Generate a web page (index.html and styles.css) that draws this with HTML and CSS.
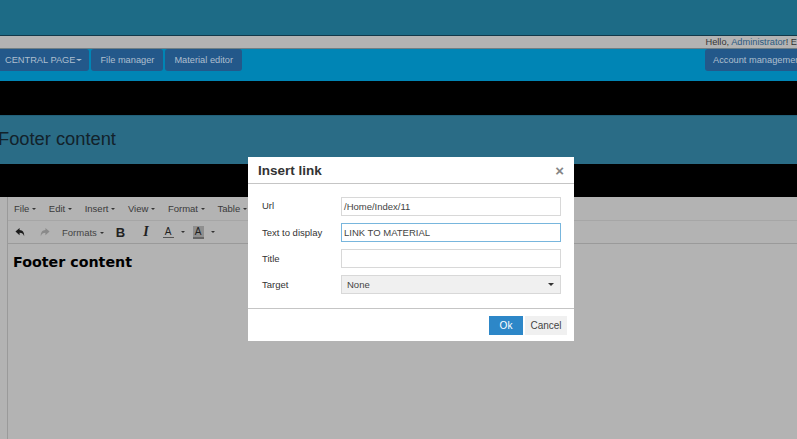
FILE: index.html
```html
<!DOCTYPE html>
<html lang="en">
<head>
    <meta charset="UTF-8">
    <title>Insert link</title>
    <link rel="stylesheet" href="styles.css">
</head>
<body>
    <div class="top-band"></div>
    <div class="user-bar">Hello, <a class="user-link">Administrator</a>! E</div>
    <nav class="nav-bar">
        <div class="nav-group">
            <span class="nav-btn nav-first">CENTRAL PAGE<i class="nav-caret"></i></span>
            <span class="nav-btn">File manager</span>
            <span class="nav-btn">Material editor</span>
        </div>
        <span class="nav-btn nav-account">Account management</span>
    </nav>
    <div class="black-band band-one"></div>
    <div class="footer-band">Footer content</div>
    <div class="black-band band-two"></div>

    <div class="editor">
        <div class="menu-row">
            <span class="menu-item">File<i class="caret"></i></span>
            <span class="menu-item">Edit<i class="caret"></i></span>
            <span class="menu-item">Insert<i class="caret"></i></span>
            <span class="menu-item">View<i class="caret"></i></span>
            <span class="menu-item">Format<i class="caret"></i></span>
            <span class="menu-item">Table<i class="caret"></i></span>
        </div>
        <div class="tool-row">
            <svg class="tool-icon" viewBox="0 0 12 12"><path fill="#1c1c1c" d="M5 1 0.5 5 5 9V6.300c2.600 0 4 1 5 3.700.3-3.600-1.500-6.400-5-6.600z"/></svg>
            <svg class="tool-icon tool-redo" viewBox="0 0 12 12"><path fill="#8a8a8a" d="M7 1l4.500 4L7 9V6.300c-2.600 0-4 1-5 3.700-.3-3.600 1.500-6.400 5-6.600z"/></svg>
            <span class="tool-formats">Formats<i class="caret"></i></span>
            <b class="tool-bold">B</b>
            <i class="tool-italic">I</i>
            <span class="tool-color">A</span><i class="caret tool-caret"></i>
            <span class="tool-color tool-back">A</span><i class="caret tool-caret"></i>
        </div>
        <div class="editor-body">Footer content</div>
    </div>

    <div class="modal">
        <div class="modal-head">
            <span class="modal-title">Insert link</span>
            <span class="modal-close">×</span>
        </div>
        <div class="modal-body">
            <div class="field">
                <span class="field-label label-url">Url</span>
                <span class="field-input">/Home/Index/11</span>
            </div>
            <div class="field">
                <span class="field-label">Text to display</span>
                <span class="field-input field-focus">LINK TO MATERIAL</span>
            </div>
            <div class="field">
                <span class="field-label">Title</span>
                <span class="field-input"></span>
            </div>
            <div class="field">
                <span class="field-label">Target</span>
                <span class="field-input field-select">None<i class="select-caret"></i></span>
            </div>
        </div>
        <div class="modal-foot">
            <span class="btn btn-ok">Ok</span>
            <span class="btn btn-cancel">Cancel</span>
        </div>
    </div>
</body>
</html>
```

FILE: styles.css
```css
html, body {
    margin: 0;
    padding: 0;
    height: 439px;
    overflow: hidden;
}
body {
    width: 797px;
    font-family: 'Liberation Sans', Arial, sans-serif;
    background: #b3b3b3;
    position: relative;
}
.top-band {
    height: 35px;
    background: #1d6b86;
    border-bottom: 1px solid #12394a;
}
.user-bar {
    height: 12px;
    background: #b3b3b3;
    border-bottom: 1px solid #6f7f85;
    font-size: 9.250px;
    line-height: 13px;
    color: #333;
    text-align: right;
    white-space: nowrap;
}
.user-link {
    color: #2c5a80;
}
.nav-bar {
    height: 32px;
    background: #0085b5;
    display: flex;
    justify-content: space-between;
    align-items: flex-start;
    overflow: hidden;
}
.nav-group {
    display: flex;
    gap: 2px;
}
.nav-btn {
    display: block;
    flex-shrink: 0;
    height: 22px;
    padding: 0 9px;
    background: #23588a;
    border-radius: 3px;
    color: #aebfcf;
    font-size: 9.250px;
    line-height: 23px;
    white-space: nowrap;
}
.nav-first {
    padding-left: 5px;
    padding-right: 7px;
    border-radius: 0 3px 3px 0;
}
.nav-caret {
    display: inline-block;
    margin-left: 1px;
    vertical-align: 2px;
    border-top: 2px solid #aebfcf;
    border-left: 3px solid transparent;
    border-right: 3px solid transparent;
}
.nav-account {
    margin-right: -15px;
    padding-left: 8px;
}
.black-band {
    background: #000;
}
.band-one {
    height: 34px;
}
.band-two {
    height: 33px;
}
.footer-band {
    height: 49px;
    background: #2a6c86;
    border-top: 1px solid #216079;
    box-sizing: border-box;
    margin-left: -2px;
    font-size: 18.300px;
    line-height: 45px;
    color: #12222b;
}
.editor {
    margin-left: 7px;
    height: 242px;
    border-left: 1px solid #9a9a9a;
}
.menu-row {
    height: 23px;
    display: flex;
    align-items: center;
    padding-left: 6px;
    gap: 12.500px;
    font-size: 9.500px;
    color: #3a3a3a;
    border-bottom: 1px solid #a6a6a6;
}
.menu-item {
    white-space: nowrap;
}
.caret {
    display: inline-block;
    margin-left: 3px;
    vertical-align: 2px;
    border-top: 2px solid #333;
    border-left: 2.500px solid transparent;
    border-right: 2.500px solid transparent;
}
.tool-row {
    height: 22px;
    display: flex;
    align-items: center;
    padding-left: 7px;
    border-bottom: 1px solid #9a9a9a;
    color: #222;
}
.tool-icon {
    width: 11px;
    height: 11px;
    margin-right: 13px;
}
.tool-redo {
    margin-right: 12px;
}
.tool-formats {
    font-size: 9.500px;
    color: #444;
    margin-right: 12px;
}
.tool-bold {
    font-size: 13px;
    margin-right: 18px;
}
.tool-italic {
    font-family: 'Liberation Serif', serif;
    font-size: 14px;
    font-weight: 700;
    margin-right: 14px;
}
.tool-color {
    font-size: 10px;
    width: 11px;
    text-align: center;
    border-bottom: 1px solid #555;
    line-height: 11px;
}
.tool-back {
    background: #8f8f8f;
    border-bottom: 2px solid #666;
}
.tool-caret {
    margin: 0 8px 0 7px;
}
.editor-body {
    padding: 10px 5px;
    font-family: 'DejaVu Sans', sans-serif;
    font-size: 14.250px;
    font-weight: 700;
    color: #000;
}
.modal {
    position: absolute;
    left: 248px;
    top: 157px;
    width: 326px;
    height: 184px;
    background: #fff;
    display: flex;
    flex-direction: column;
}
.modal-head {
    height: 26px;
    display: flex;
    justify-content: space-between;
    align-items: center;
    padding: 0 10px;
    border-bottom: 1px solid #c5c5c5;
}
.modal-title {
    font-size: 13.500px;
    font-weight: 700;
    color: #333;
}
.modal-close {
    font-size: 15px;
    font-weight: 700;
    color: #858585;
}
.modal-body {
    height: 125px;
    box-sizing: border-box;
    padding: 13px 13px 0 14px;
    display: flex;
    flex-direction: column;
    gap: 7px;
    border-bottom: 1px solid #c5c5c5;
}
.field {
    display: flex;
    align-items: center;
    height: 19px;
}
.field-label {
    width: 79px;
    font-size: 9.500px;
    color: #333;
}
.label-url {
    margin-bottom: 2px;
}
.field-input {
    display: block;
    box-sizing: border-box;
    width: 220px;
    height: 19px;
    border: 1px solid #d8d8d8;
    padding: 0 2px;
    font-size: 9.500px;
    line-height: 17px;
    color: #444;
    position: relative;
}
.field-focus {
    border-color: #78b6dd;
}
.field-select {
    background: #f0f0f0;
    padding-left: 5px;
}
.select-caret {
    position: absolute;
    right: 6px;
    top: 7px;
    border-top: 3px solid #333;
    border-left: 3px solid transparent;
    border-right: 3px solid transparent;
}
.modal-foot {
    flex: 1;
    display: flex;
    justify-content: flex-end;
    align-items: flex-start;
    padding: 7px 7px 0 0;
    gap: 2px;
}
.btn {
    display: block;
    height: 19px;
    box-sizing: border-box;
    font-size: 10px;
    line-height: 19px;
    text-align: center;
}
.btn-ok {
    width: 34px;
    background: #2d87c8;
    color: #fff;
}
.btn-cancel {
    width: 42px;
    background: #f0f0f0;
    color: #444;
}
```
